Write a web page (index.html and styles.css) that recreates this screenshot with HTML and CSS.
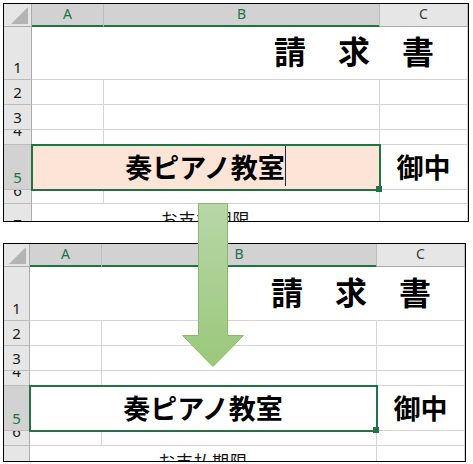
FILE: index.html
```html
<!DOCTYPE html>
<html lang="ja">
<head>
    <meta charset="UTF-8">
    <title>請求書</title>
    <link rel="stylesheet" href="styles.css">
</head>
<body>

<div class="page">

    <!-- 入力中（背景色あり） -->
    <div class="sheet sheet-before">
        <div class="corner">
            <svg width="18" height="19" viewBox="0 0 18 19"><path d="M17 1V18H0Z" fill="#b4b4b4"/></svg>
        </div>
        <div class="colhead sel">A</div>
        <div class="colhead sel">B</div>
        <div class="colhead">C</div>

        <div class="rowhead"><span>1</span></div>
        <div class="cell title span-3">請　求　書</div>

        <div class="rowhead"><span>2</span></div>
        <div class="cell"></div>
        <div class="cell"></div>
        <div class="cell"></div>

        <div class="rowhead"><span>3</span></div>
        <div class="cell"></div>
        <div class="cell"></div>
        <div class="cell"></div>

        <div class="rowhead short"><span>4</span></div>
        <div class="cell"></div>
        <div class="cell"></div>
        <div class="cell"></div>

        <div class="rowhead sel"><span>5</span></div>
        <div class="cell name span-2 active filled">奏ピアノ教室<i class="caret"></i><b class="handle"></b></div>
        <div class="cell name">御中</div>

        <div class="rowhead short"><span>6</span></div>
        <div class="cell"></div>
        <div class="cell"></div>
        <div class="cell"></div>

        <div class="rowhead"><span>7</span></div>
        <div class="cell due span-2">お支払期限</div>
        <div class="cell"></div>
    </div>

    <!-- 確定後 -->
    <div class="sheet sheet-after">
        <div class="corner">
            <svg width="18" height="19" viewBox="0 0 18 19"><path d="M17 1V18H0Z" fill="#b4b4b4"/></svg>
        </div>
        <div class="colhead sel">A</div>
        <div class="colhead sel">B</div>
        <div class="colhead">C</div>

        <div class="rowhead"><span>1</span></div>
        <div class="cell title span-3">請　求　書</div>

        <div class="rowhead"><span>2</span></div>
        <div class="cell"></div>
        <div class="cell"></div>
        <div class="cell"></div>

        <div class="rowhead"><span>3</span></div>
        <div class="cell"></div>
        <div class="cell"></div>
        <div class="cell"></div>

        <div class="rowhead short"><span>4</span></div>
        <div class="cell"></div>
        <div class="cell"></div>
        <div class="cell"></div>

        <div class="rowhead sel"><span>5</span></div>
        <div class="cell name span-2 active">奏ピアノ教室<b class="handle"></b></div>
        <div class="cell name">御中</div>

        <div class="rowhead short"><span>6</span></div>
        <div class="cell"></div>
        <div class="cell"></div>
        <div class="cell"></div>

        <div class="rowhead"><span>7</span></div>
        <div class="cell due span-2">お支払期限</div>
        <div class="cell"></div>
    </div>

    <svg class="arrow" width="64" height="166" viewBox="0 0 64 166">
        <defs>
            <linearGradient id="arrowFill" x1="0" y1="0" x2="0" y2="1">
                <stop offset="0" stop-color="#b7d7a7"/>
                <stop offset="1" stop-color="#9bc87b"/>
            </linearGradient>
        </defs>
        <path d="M17.5 1.5H46.5V133.5H62.5L32 164.5L1.5 133.5H17.5Z" fill="url(#arrowFill)" stroke="#88bb64"/>
    </svg>
</div>

</body>
</html>
```

FILE: styles.css
```css
* {
    margin: 0;
    padding: 0;
    box-sizing: border-box;
}

body {
    background-color: #ffffff;
    font-family: "Noto Sans", "Noto Sans CJK JP", sans-serif;
}

.page {
    position: relative;
    display: flex;
    flex-direction: column;
    gap: 21px;
    padding: 3px;
}

/* シート */
.sheet {
    display: grid;
    height: 219px;
    border: 1px solid #000000;
    overflow: hidden;
    background-color: #ffffff;
}

.sheet-before {
    width: 466px;
    grid-template-columns: 28px 72px 276px 88px;
    grid-template-rows: 23px 53px 25px 25px 15px 45px 14px 33px;
}

.sheet-after {
    width: 463px;
    grid-template-columns: 26px 72px 275px 88px;
    grid-template-rows: 23px 54px 25px 25px 15px 45px 15px 33px;
}

/* 見出し */
.corner {
    background-color: #e6e6e6;
    border-right: 1px solid #ababab;
    border-bottom: 1px solid #ababab;
    display: flex;
    justify-content: flex-end;
    align-items: flex-end;
    padding: 0 2px 1px 0;
}

.corner svg {
    display: block;
}

.colhead {
    background-color: #e6e6e6;
    border-right: 1px solid #bcbcbc;
    border-bottom: 1px solid #ababab;
    display: flex;
    justify-content: center;
    align-items: center;
    padding-bottom: 2px;
    font-size: 14px;
    line-height: 18px;
    color: #3a3a3a;
}

.colhead.sel {
    background-color: #d2d2d2;
    color: #217346;
    border-bottom-color: #217346;
    box-shadow: inset 0 -1px 0 #217346;
}

.rowhead {
    background-color: #e6e6e6;
    border-right: 1px solid #ababab;
    border-bottom: 1px solid #bcbcbc;
    display: flex;
    justify-content: center;
    align-items: flex-end;
    padding-bottom: 3px;
    overflow: hidden;
    font-size: 15px;
    line-height: 18px;
    color: #1a1a1a;
}

.rowhead.short {
    align-items: flex-start;
    padding-bottom: 0;
}

.rowhead.short span {
    margin-top: -9px;
}

.rowhead.sel {
    background-color: #d2d2d2;
    color: #217346;
}

/* セル */
.cell {
    border-right: 1px solid #d4d4d4;
    border-bottom: 1px solid #d4d4d4;
    display: flex;
    align-items: center;
    justify-content: center;
    font-family: "Noto Sans CJK JP", "Noto Sans", sans-serif;
    font-weight: 700;
    color: #000000;
    line-height: 1;
    white-space: nowrap;
    overflow: hidden;
}

.span-2 {
    grid-column: span 2;
}

.span-3 {
    grid-column: span 3;
}

.title {
    font-size: 32px;
    justify-content: flex-end;
    padding: 0 33px 6px 0;
}

.name {
    font-size: 27px;
    padding-bottom: 2px;
}

.active {
    position: relative;
    z-index: 1;
    overflow: visible;
    border-color: transparent;
    outline: 2px solid #217346;
    outline-offset: -1px;
}

.filled {
    background-color: #fce4d6;
}

.caret {
    align-self: stretch;
    width: 1px;
    margin: 0 0 1px 0;
    background-color: #1c2c3a;
}

.handle {
    position: absolute;
    right: -3px;
    bottom: -3px;
    width: 6px;
    height: 6px;
    background-color: #217346;
}

.due {
    font-size: 17px;
    font-weight: 400;
    letter-spacing: 1px;
    align-items: flex-start;
    padding-top: 6px;
    color: #111111;
}

/* 矢印 */
.arrow {
    position: absolute;
    left: 181px;
    top: 202px;
    z-index: 5;
}
```
